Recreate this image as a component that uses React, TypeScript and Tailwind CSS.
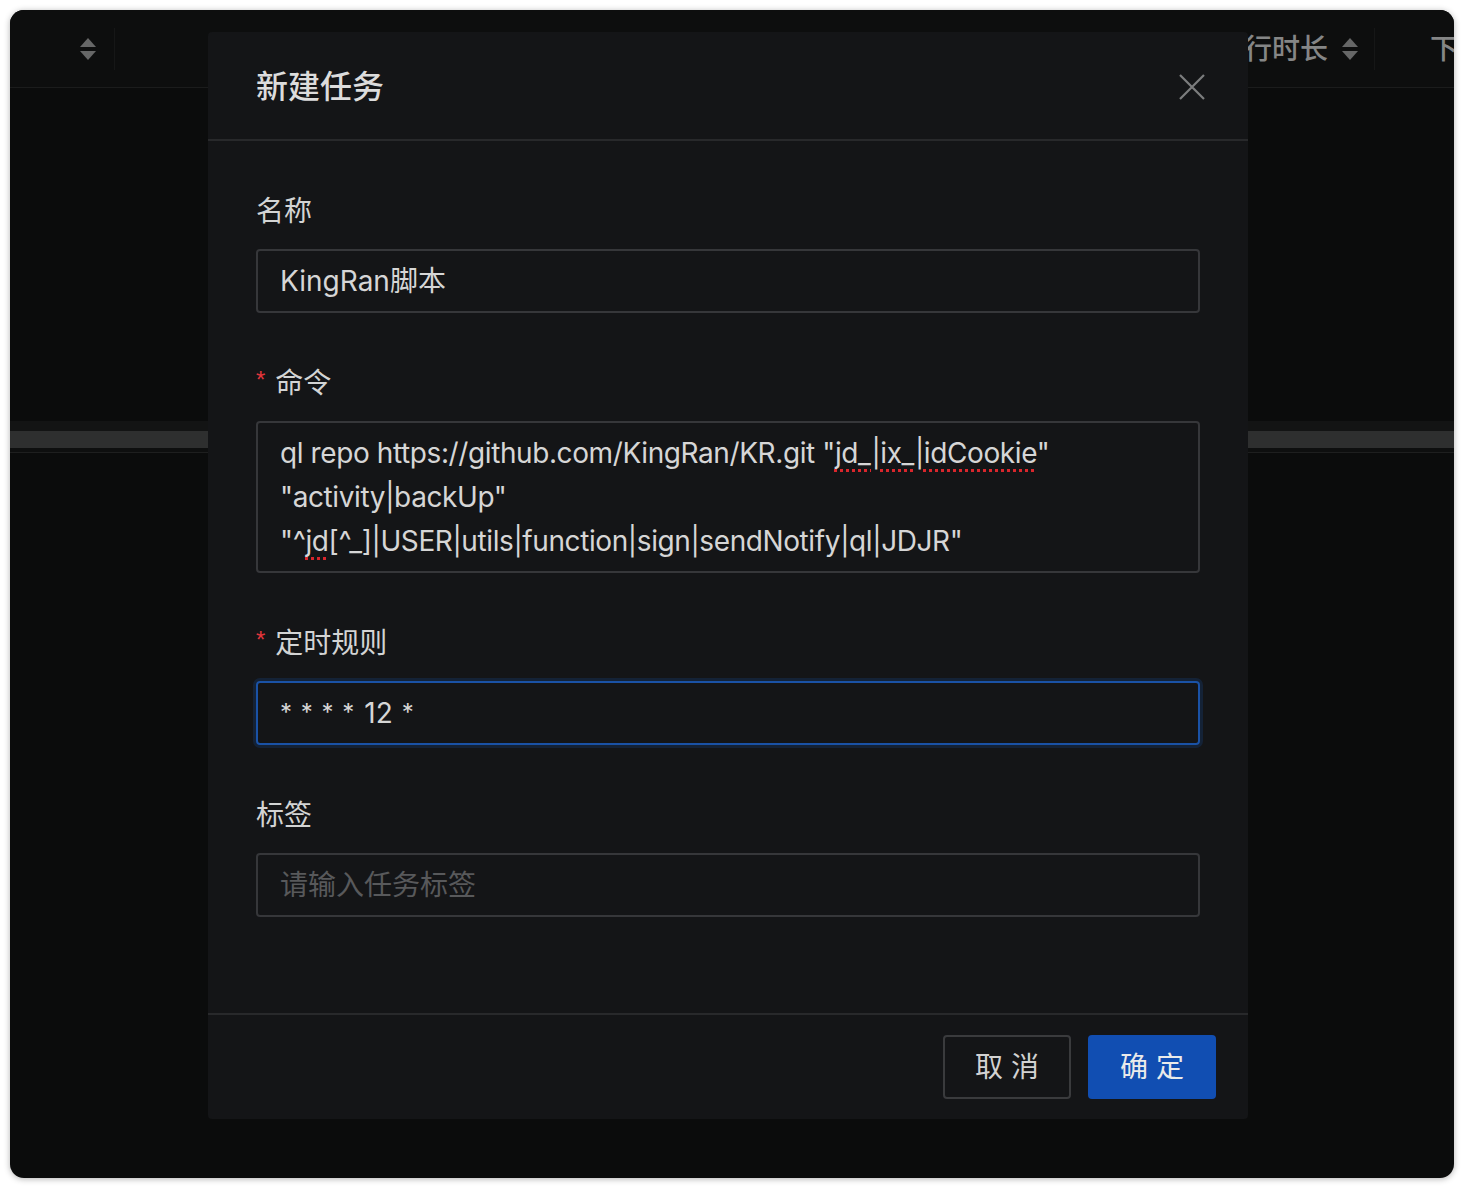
import React from 'react'

const font = "font-['Inter','Noto_Sans_CJK_SC',sans-serif]"

const SortIcon = () => (
  <svg width="18" height="22" viewBox="0 0 18 22" className="shrink-0 text-[#666767]">
    <path d="M9 0 L17 9 H1 Z" fill="currentColor" />
    <path d="M9 22 L17 13 H1 Z" fill="currentColor" />
  </svg>
)

const CloseIcon = () => (
  <svg width="26" height="26" viewBox="0 0 26 26" className="text-[#7c7d7e]">
    <path d="M1 1 L25 25 M25 1 L1 25" stroke="currentColor" strokeWidth="2.2" fill="none" />
  </svg>
)

const Label = ({ children, required }: { children: React.ReactNode; required?: boolean }) => (
  <div className="flex items-center h-[44px] mb-[16px] text-[28px] text-[#d3d4d4]">
    {required && <span className="mr-[10px] -mt-[6px] text-[24px] text-[#e3363c] font-['Liberation_Sans',sans-serif]">*</span>}
    {children}
  </div>
)

const Squiggle = ({ children }: { children: React.ReactNode }) => (
  <span className="underline decoration-dotted decoration-[#d9262c] decoration-[3px] underline-offset-[6px]">{children}</span>
)

const BgHeader = () => (
  <div className="flex h-[78px] items-center border-b border-[#1b1c1c] bg-[#0d0e0e] text-[28px] font-medium text-[#858686] whitespace-nowrap">
    <div className="flex h-[42px] w-[105px] shrink-0 items-center justify-end border-r border-[#161717] pr-[17px]">
      <SortIcon />
    </div>
    <div className="flex w-[515px] shrink-0 items-center pl-[210px] pr-[31px]">
      <span>任务</span>
      <span className="ml-auto"><SortIcon /></span>
    </div>
    <div className="flex w-[230px] shrink-0 items-center pl-[25px] pr-[41px]">
      <span>任务定时</span>
      <span className="ml-auto"><SortIcon /></span>
    </div>
    <div className="flex w-[265px] shrink-0 items-center pl-[30px] pr-[11px]">
      <span>最后运行时间</span>
      <span className="ml-auto"><SortIcon /></span>
    </div>
    <div className="flex h-[42px] w-[250px] shrink-0 items-center gap-[13px] border-r border-[#161717] pl-[35px]">
      <span>最后运行时长</span>
      <SortIcon />
    </div>
    <div className="shrink-0 pl-[55px]">下次</div>
  </div>
)

export default function App() {
  return (
    <div className={`w-[1464px] h-[1188px] bg-white p-[10px] ${font}`}>
      <div className="relative w-[1444px] h-[1168px] overflow-hidden rounded-[14px] bg-[#0b0c0c] shadow-[0_1px_6px_rgba(0,0,0,0.3)]">
        <BgHeader />
        <div className="h-[333px]" />
        <div className="h-[10px] bg-[#131414]" />
        <div className="h-[17px] bg-[#2e2f2f]" />
        <div className="h-[4px] bg-[#0e0f0f]" />
        <div className="h-[1px] bg-[#1e1f1f]" />

        <div className="absolute left-[198px] top-[22px] w-[1040px] rounded-[4px] bg-[#141517]">
          <div className="flex h-[109px] items-center border-b-2 border-[#28292b] pl-[48px] pt-[2px]">
            <div className="flex-1 text-[32px] font-medium text-[#dcdcdc]">新建任务</div>
            <div className="flex h-[108px] w-[112px] items-center justify-center">
              <CloseIcon />
            </div>
          </div>

          <div className="p-[48px] text-[#d6d6d6]">
            <div className="mb-[48px]">
              <Label>名称</Label>
              <div className="flex h-[64px] items-center rounded-[4px] border-2 border-[#36373a] px-[22px] text-[28px]">
                KingRan脚本
              </div>
            </div>

            <div className="mb-[48px]">
              <Label required>命令</Label>
              <div className="rounded-[4px] border-2 border-[#36373a] px-[22px] py-[8px] text-[28px] leading-[44px] tracking-[-0.4px] whitespace-nowrap">
                <div>
                  ql repo https://github.com/KingRan/KR.git "<Squiggle>jd_</Squiggle>|<Squiggle>ix_</Squiggle>|<Squiggle>idCookie</Squiggle>"
                </div>
                <div>"activity|backUp"</div>
                <div>
                  "^<Squiggle>jd</Squiggle>[^_]|USER|utils|function|sign|sendNotify|ql|JDJR"
                </div>
              </div>
            </div>

            <div className="mb-[48px]">
              <Label required>定时规则</Label>
              <div className="flex h-[64px] items-center rounded-[4px] border-2 border-[#1a52a6] px-[22px] text-[28px] whitespace-pre shadow-[0_0_0_3px_rgba(23,80,170,0.22)]">
                <span className="text-[24px] [word-spacing:2px]">* * * *</span>
                <span className="ml-[10px]">12</span>
                <span className="ml-[9px] text-[24px]">*</span>
              </div>
            </div>

            <div className="mb-[48px]">
              <Label>标签</Label>
              <div className="flex h-[64px] items-center rounded-[4px] border-2 border-[#36373a] px-[22px] text-[28px] text-[#58595b]">
                请输入任务标签
              </div>
            </div>
          </div>

          <div className="flex h-[106px] items-center justify-end gap-[17px] border-t-2 border-[#28292b] pr-[32px]">
            <button className="flex h-[64px] w-[128px] items-center justify-center rounded-[4px] border-2 border-[#3a3b3d] text-[28px] text-[#d2d2d2]">
              <span className="mr-[-8px] tracking-[8px]">取消</span>
            </button>
            <button className="flex h-[64px] w-[128px] items-center justify-center rounded-[4px] bg-[#114eb2] text-[28px] text-[#eaeaea]">
              <span className="mr-[-8px] tracking-[8px]">确定</span>
            </button>
          </div>
        </div>
      </div>
    </div>
  )
}
